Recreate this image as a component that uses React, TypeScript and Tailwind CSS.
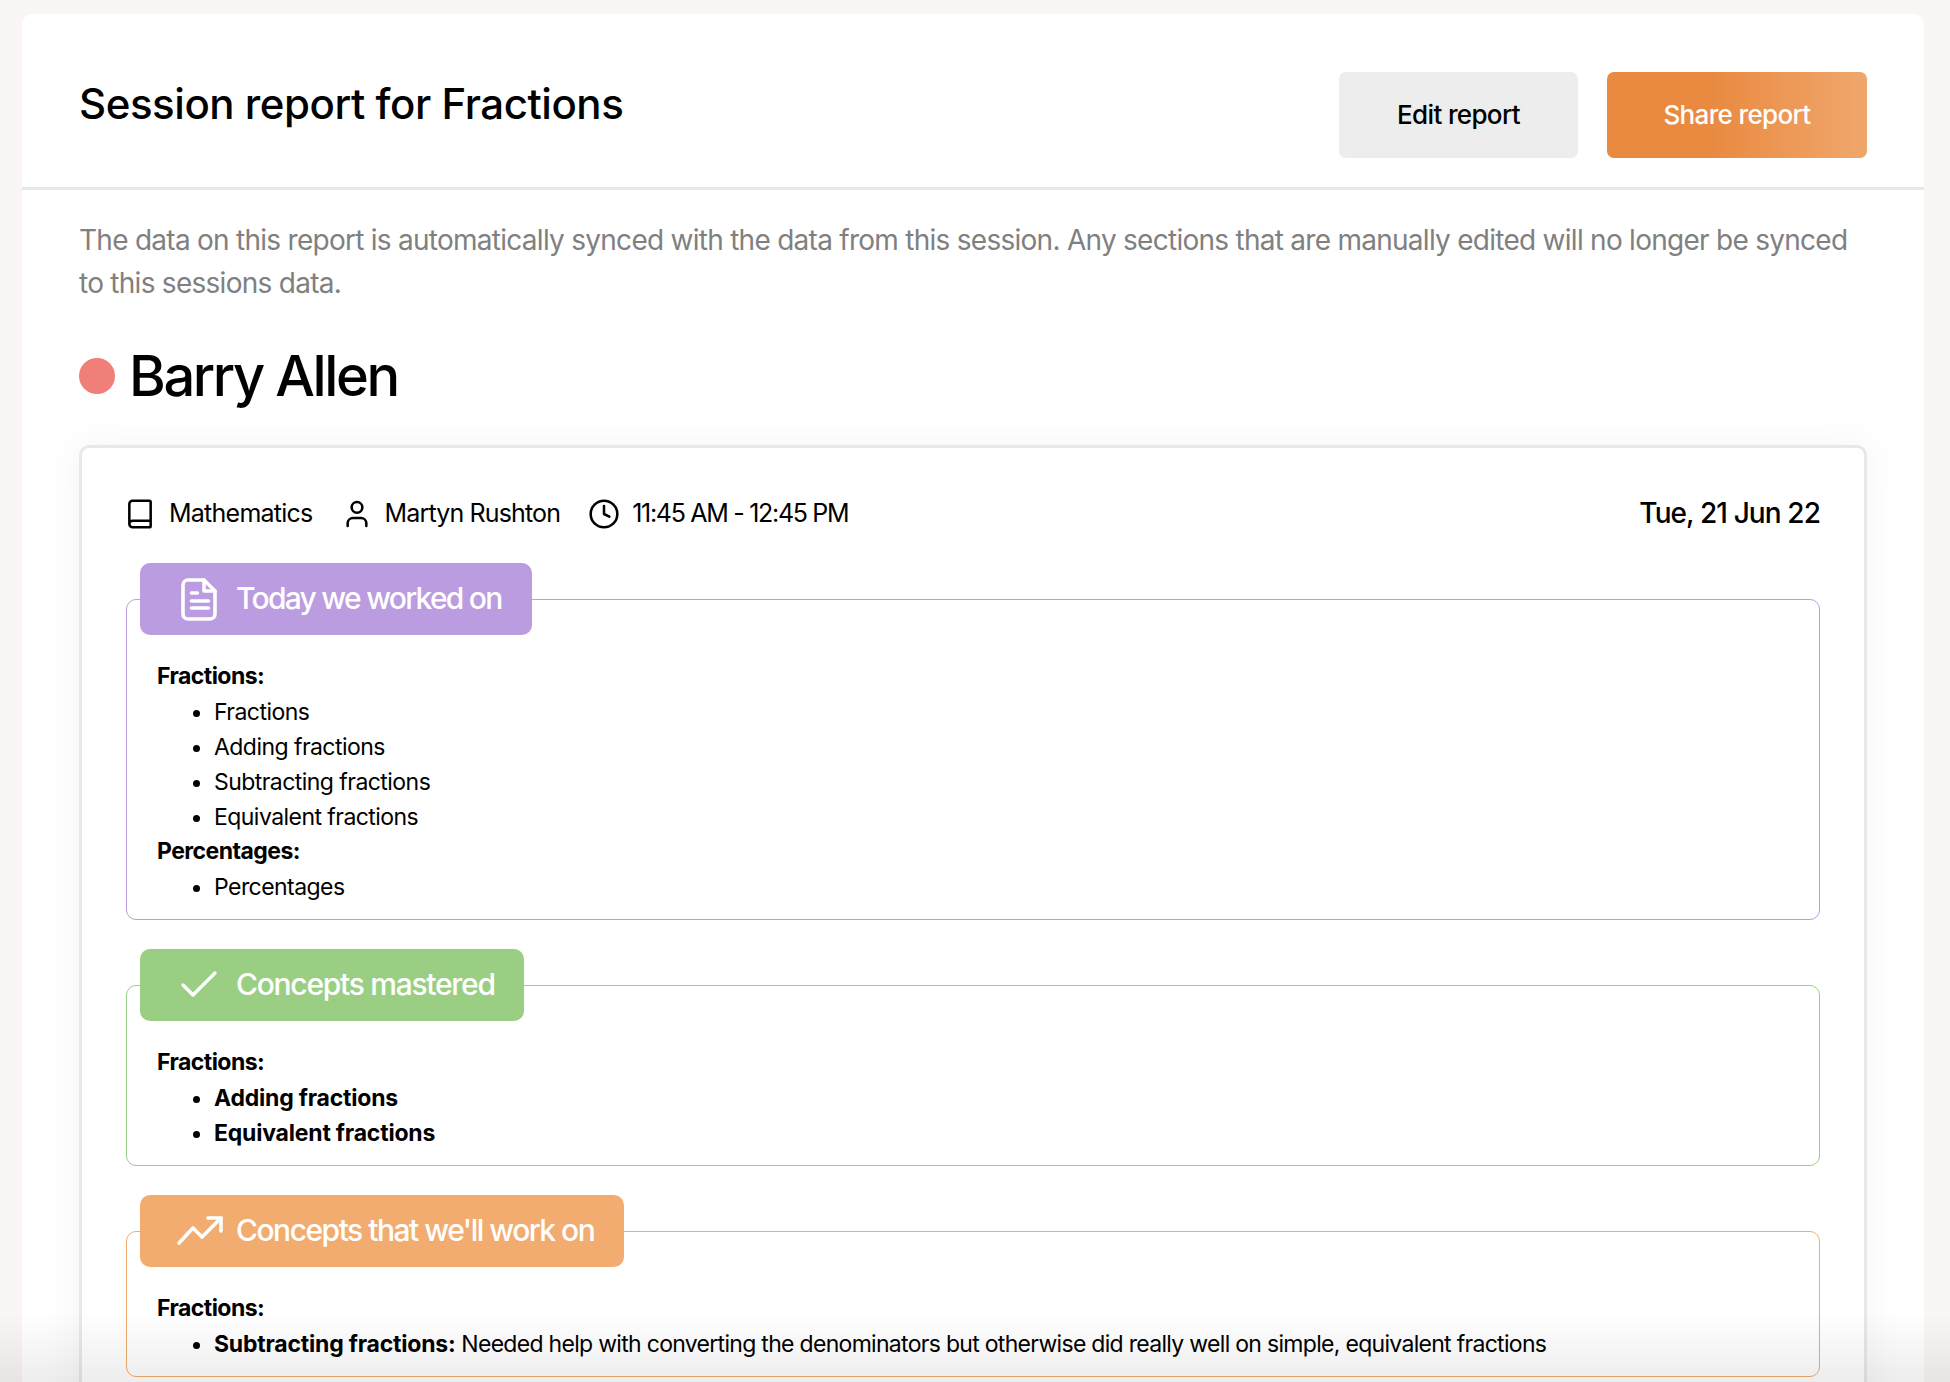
import { Book, Check, Clock, User } from "lucide-react";
import type { ReactNode } from "react";

function DocIcon() {
  return (
    <svg width="48" height="48" viewBox="0 0 48 48" fill="none" stroke="currentColor" strokeWidth="3.6" strokeLinecap="round" strokeLinejoin="round">
      <path d="M29 5H13a5 5 0 0 0-5 5v29a5 5 0 0 0 5 5h22a5 5 0 0 0 5-5V16Z" />
      <path d="M29 5v11h11" />
      <path d="M16.5 18h6M16.5 26h17M16.5 33h17" />
    </svg>
  );
}

function TrendIcon() {
  return (
    <svg width="48" height="48" viewBox="0 0 48 48" fill="none" stroke="currentColor" strokeWidth="3.6" strokeLinecap="round" strokeLinejoin="round">
      <path d="M4 36 18 21l9 9 19-19" />
      <path d="M33 11h13v13" />
    </svg>
  );
}

function Heading({ children }: { children: ReactNode }) {
  return <div className="h-[35px] leading-[33px] font-bold">{children}</div>;
}

function Section({
  boxClass,
  tagClass,
  icon,
  title,
  children,
}: {
  boxClass: string;
  tagClass: string;
  icon: ReactNode;
  title: string;
  children: ReactNode;
}) {
  return (
    <div className={`relative rounded-[10px] border pt-[60px] pb-[14px] pl-[30px] text-[23px] leading-[35px] tracking-[-0.55px] text-black ${boxClass}`}>
      <div className={`absolute -top-[37px] left-[13px] flex h-[72px] items-center rounded-[10px] text-[30px] font-medium text-white ${tagClass}`}>
        <div className="w-[96px] shrink-0 pl-[35px]">{icon}</div>
        <span className="whitespace-nowrap pb-[1px]">{title}</span>
      </div>
      {children}
    </div>
  );
}

function Items({ items, bold }: { items: ReactNode[]; bold?: boolean }) {
  return (
    <ul className={`list-disc pl-[57px] ${bold ? "font-bold tracking-[-0.2px]" : ""}`}>
      {items.map((item, i) => (
        <li key={i}>{item}</li>
      ))}
    </ul>
  );
}

export default function App() {
  return (
    <div className="h-screen overflow-hidden bg-[#faf6f5] pt-[14px] pl-[22px] pr-[26px] font-[Inter,sans-serif]">
      <div className="relative rounded-t-[10px] bg-white">
        <header className="flex h-[176px] items-start justify-between border-b-[3px] border-[#e7e8ec] pr-[57px] pl-[57px] pt-[58px]">
          <h1 className="mt-[7px] text-[42px] leading-[50px] font-medium tracking-[-0.45px] text-black">Session report for Fractions</h1>
          <div className="flex gap-[29px]">
            <button className="h-[86px] w-[239px] rounded-[7px] bg-[#ededed] pb-[2px] text-[26px] font-medium tracking-[-0.65px] text-black">Edit report</button>
            <button className="h-[86px] w-[260px] rounded-[7px] bg-gradient-to-r from-[#e98a40] from-40% to-[#f0a76c] pb-[2px] text-[26px] font-medium tracking-[-0.65px] text-white">Share report</button>
          </div>
        </header>

        <div className="px-[57px] pt-[29px]">
          <p className="text-[28px] leading-[43px] tracking-[-0.73px] text-[#808080]">
            The data on this report is automatically synced with the data from this session. Any sections that are manually edited will no longer be synced to this sessions data.
          </p>

          <div className="mt-[36px] flex items-center">
            <span className="h-[36px] w-[36px] rounded-full bg-[#f07f7a]" />
            <h2 className="ml-[14px] text-[56px] leading-[70px] font-medium tracking-[-2.4px] text-black">Barry Allen</h2>
          </div>

          <div className="relative mt-[34px] rounded-t-[10px] border-[3px] border-[#e7e8ec] px-[44px] pt-[48px] pb-[100px] shadow-[0_0_40px_rgba(0,0,0,0.05)]">
            <div className="flex h-[36px] items-center justify-between text-black">
              <div className="flex items-center text-[25px] tracking-[-0.85px]">
                <Book size={32} strokeWidth={1.9} className="ml-[-2px] shrink-0" />
                <span className="ml-[13px] tracking-[-0.75px]">Mathematics</span>
                <User size={32} strokeWidth={1.9} className="ml-[28px] shrink-0" />
                <span className="ml-[12px]">Martyn Rushton</span>
                <Clock size={32} strokeWidth={1.9} className="ml-[28px] shrink-0" />
                <span className="ml-[12px] tracking-[-1.3px]">11:45 AM - 12:45 PM</span>
              </div>
              <span className="pb-[2px] text-[28px] font-medium tracking-[-0.9px]">Tue, 21 Jun 22</span>
            </div>

            <div className="mt-[67px] flex flex-col gap-[65px]">
              <Section
                boxClass="border-[#bb9ce0]"
                tagClass="w-[392px] bg-[#bb9ce0] tracking-[-1.73px]"
                icon={<DocIcon />}
                title="Today we worked on"
              >
                <Heading>Fractions:</Heading>
                <Items items={["Fractions", "Adding fractions", "Subtracting fractions", "Equivalent fractions"]} />
                <Heading>Percentages:</Heading>
                <Items items={["Percentages"]} />
              </Section>

              <Section
                boxClass="border-[#9acf83]"
                tagClass="w-[384px] bg-[#9acf83] tracking-[-1.27px]"
                icon={<Check size={48} strokeWidth={1.7} />}
                title="Concepts mastered"
              >
                <Heading>Fractions:</Heading>
                <Items bold items={["Adding fractions", "Equivalent fractions"]} />
              </Section>

              <Section
                boxClass="border-[#f2ac70]"
                tagClass="w-[484px] bg-[#f2ac70] tracking-[-1.5px]"
                icon={<TrendIcon />}
                title="Concepts that we'll work on"
              >
                <Heading>Fractions:</Heading>
                <Items
                  items={[
                    <span key="sub" className="tracking-[-0.7px]">
                      <b className="tracking-[-0.2px]">Subtracting fractions:</b> Needed help with converting the denominators but otherwise did really well on simple, equivalent fractions
                    </span>,
                  ]}
                />
              </Section>
            </div>
          </div>
        </div>
      </div>
      {/* fade over the bottom of the page */}
      <div className="pointer-events-none fixed inset-x-0 bottom-0 h-[70px] bg-gradient-to-b from-transparent to-[rgba(0,0,0,0.07)]" />
    </div>
  );
}
